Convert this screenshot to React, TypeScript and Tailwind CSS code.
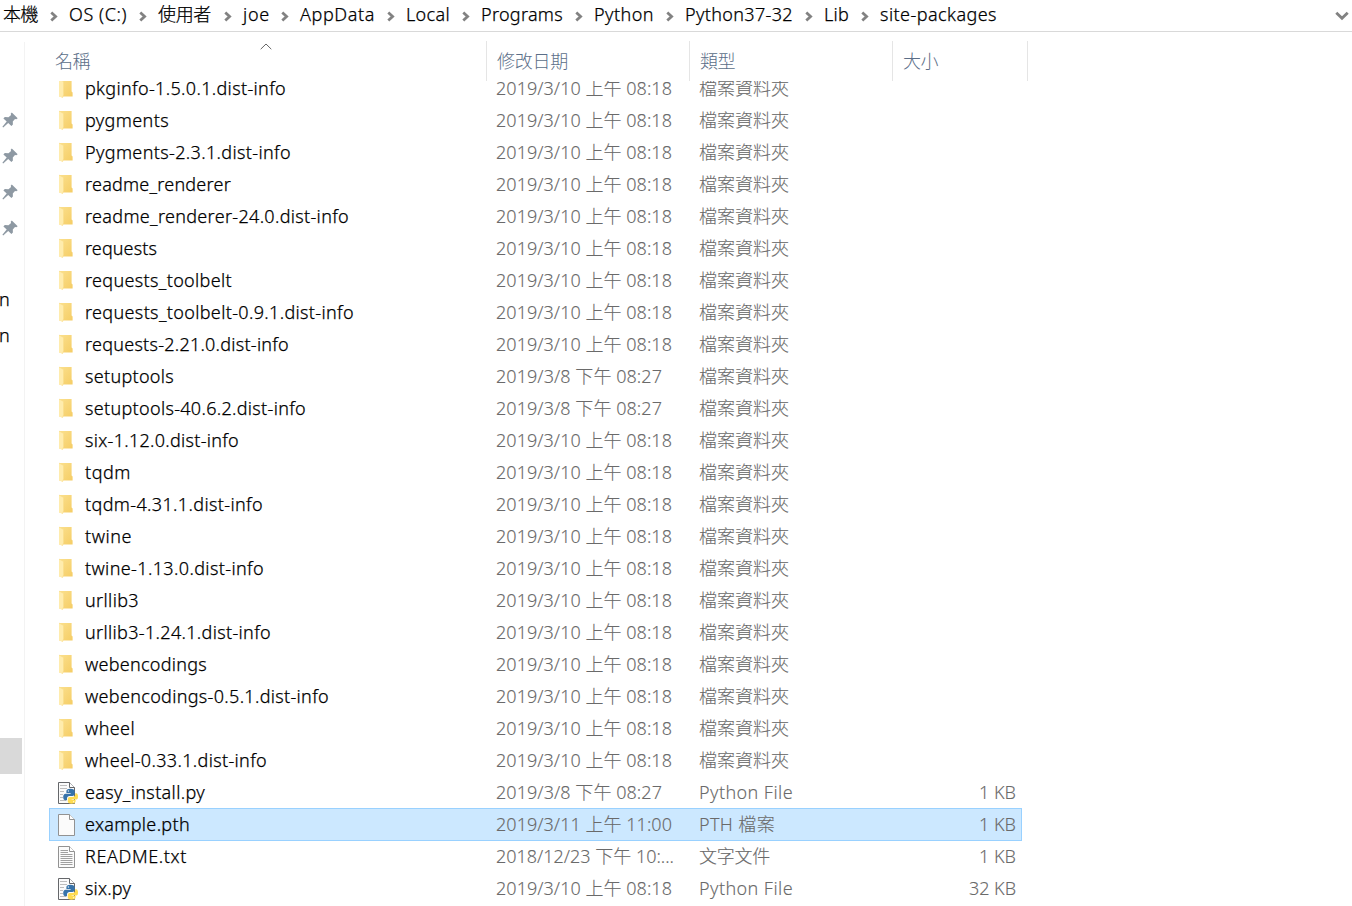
import { useLayoutEffect, useRef } from "react";

type Kind = "folder" | "python" | "blank" | "text";

interface Entry {
  name: string;
  width: number;
  date: string;
  type: string;
  size?: string;
  kind: Kind;
  selected?: boolean;
}

const MORNING = "2019/3/10 上午 08:18";
const EVENING = "2019/3/8 下午 08:27";
const folder = (name: string, width: number, date = MORNING): Entry => ({
  name,
  width,
  date,
  type: "檔案資料夾",
  kind: "folder",
});

const entries: Entry[] = [
  folder("pkginfo-1.5.0.1.dist-info", 201),
  folder("pygments", 84),
  folder("Pygments-2.3.1.dist-info", 206),
  folder("readme_renderer", 146),
  folder("readme_renderer-24.0.dist-info", 264),
  folder("requests", 72),
  folder("requests_toolbelt", 147),
  folder("requests_toolbelt-0.9.1.dist-info", 269),
  folder("requests-2.21.0.dist-info", 204),
  folder("setuptools", 89, EVENING),
  folder("setuptools-40.6.2.dist-info", 221, EVENING),
  folder("six-1.12.0.dist-info", 154),
  folder("tqdm", 46),
  folder("tqdm-4.31.1.dist-info", 178),
  folder("twine", 47),
  folder("twine-1.13.0.dist-info", 179),
  folder("urllib3", 54),
  folder("urllib3-1.24.1.dist-info", 186),
  folder("webencodings", 122),
  folder("webencodings-0.5.1.dist-info", 244),
  folder("wheel", 50),
  folder("wheel-0.33.1.dist-info", 182),
  { name: "easy_install.py", width: 120, date: EVENING, type: "Python File", size: "1 KB", kind: "python" },
  { name: "example.pth", width: 105, date: "2019/3/11 上午 11:00", type: "PTH 檔案", size: "1 KB", kind: "blank", selected: true },
  { name: "README.txt", width: 102, date: "2018/12/23 下午 10:...", type: "文字文件", size: "1 KB", kind: "text" },
  { name: "six.py", width: 46, date: MORNING, type: "Python File", size: "32 KB", kind: "python" },
];

const dateWidths: Record<string, number> = {
  [MORNING]: 176,
  [EVENING]: 166,
  "2019/3/11 上午 11:00": 176,
  "2018/12/23 下午 10:...": 178,
};

const typeWidths: Record<string, number> = {
  檔案資料夾: 90,
  "Python File": 94,
  "PTH 檔案": 76,
  文字文件: 71,
};

const crumbs = [
  { label: "本機", width: 35, cell: "w-[66px]" },
  { label: "OS (C:)", width: 58, cell: "w-[89px]" },
  { label: "使用者", width: 53, cell: "w-[85px]" },
  { label: "joe", width: 27, cell: "w-[57px]" },
  { label: "AppData", width: 75, cell: "w-[106px]" },
  { label: "Local", width: 44, cell: "w-[75px]" },
  { label: "Programs", width: 82, cell: "w-[113px]" },
  { label: "Python", width: 60, cell: "w-[91px]" },
  { label: "Python37-32", width: 108, cell: "w-[139px]" },
  { label: "Lib", width: 25, cell: "w-[56px]" },
  { label: "site-packages", width: 117, cell: "w-[130px]" },
];

/** Spreads a label's letters so that it takes up the given width. */
function Fit({ text, width }: { text: string; width: number }) {
  const ref = useRef<HTMLSpanElement>(null);
  useLayoutEffect(() => {
    const el = ref.current;
    if (!el) return;
    el.style.letterSpacing = "0px";
    const natural = el.getBoundingClientRect().width;
    el.style.letterSpacing = `${(width - natural) / text.length}px`;
  }, [text, width]);
  return (
    <span ref={ref} className="inline-block whitespace-pre">
      {text}
    </span>
  );
}

function FolderIcon() {
  return (
    <svg width="16" height="20" viewBox="0 0 16 20" className="block">
      <defs>
        <linearGradient id="folderBack" x1="0" x2="1" y1="0" y2="1">
          <stop offset="0" stopColor="#fbe08e" />
          <stop offset="1" stopColor="#f5cd65" />
        </linearGradient>
      </defs>
      <path d="M1 1H13.6V13.5L14.6 14.5V18.5H1Z" fill="url(#folderBack)" />
      <path d="M1 1L5.6 3.6V16.6L4.4 20L1 18.3Z" fill="#ffecad" />
      <path d="M1 1L5.6 3.6V16.6L4.4 20" fill="none" stroke="#f8da83" strokeWidth=".5" />
    </svg>
  );
}

function FileIcon({ kind }: { kind: Kind }) {
  const edge = kind === "python" ? "#65676a" : "#929292";
  return (
    <svg width="21" height="23" viewBox="0 0 21 23" className="block">
      <path d="M1.5 1.5H12.5L17.5 6.5V22.5H1.5Z" fill="#fbfbfb" stroke={edge} />
      <path d="M12.5 1.5V6.5H17.5" fill="#fff" stroke={edge} />
      {kind === "text" && (
        <path
          d="M3.5 5.5H11M3.5 7.5H11M3.5 9.5H15.5M3.5 11.5H15.5M3.5 13.5H15.5M3.5 15.5H15.5M3.5 17.5H15.5M3.5 19.5H15.5"
          stroke="#a0a0a0"
        />
      )}
      {kind === "python" && (
        <>
          <path d="M3 4.5H10M3 7.5H10M3 10.5H7M3 13.5H6M3 16.5H6M3 19.5H9" stroke="#bdbdbd" />
          <path
            d="M13.4 7.8C10.3 7.8 9.4 8.8 9.4 10.3V12H13.6V12.7H8.6C7 12.7 6.2 14.1 6.2 15.9C6.2 18 7.1 19.2 8.6 19.2H10V17.3C10 15.9 11 14.9 12.4 14.9H15.4C16.7 14.9 17.6 14 17.6 12.8V10.3C17.6 8.7 16.4 7.8 13.4 7.8Z"
            fill="#3773aa"
          />
          <path
            d="M18.2 12.2V13.6C18.2 15.2 17.2 16.1 15.8 16.1H12.8C11.6 16.1 10.8 17 10.8 18.1V20.3C10.8 21.9 12 22.8 14.4 22.8C17 22.8 18.6 22 18.6 20.3V19.1H14.6V18.4H19.5C20.5 18.4 21 17.2 21 15.4C21 13.5 20.4 12.2 19.2 12.2Z"
            fill="#ffdc52"
          />
          <circle cx="11.4" cy="10" r=".7" fill="#dbe6ef" />
          <circle cx="16.6" cy="20.7" r=".7" fill="#fff6cf" />
        </>
      )}
    </svg>
  );
}

function Pin() {
  return (
    <svg width="16" height="16" viewBox="0 0 16 16" className="block">
      <path
        d="M9.8 0.4L15.7 6.2L14.3 7.2L13 6.9L10.8 9.5L10.9 12.6L9.4 14.1L6.2 11L1.2 15.4L0.4 14.8L4.7 9.4L1.4 6.5L2.8 5.1L6.5 5.3L9.1 3.1L8.7 1.7Z"
        fill="#8e99a3"
      />
    </svg>
  );
}

function Chevron() {
  return (
    <svg width="8" height="11" viewBox="0 0 8 11" className="block">
      <path d="M1.3 1.5L5.6 5.5L1.3 9.5" fill="none" stroke="#828282" strokeWidth="2.8" />
    </svg>
  );
}

export default function App() {
  return (
    <div className="flex h-[906px] w-[1352px] flex-col overflow-hidden bg-white font-['Noto_Sans','Noto_Sans_CJK_TC',sans-serif] text-[18px] leading-8 font-light text-black">
      <header className="flex h-8 shrink-0 border-b border-[#d9d9d9] pl-[3px] [-webkit-text-stroke:0.25px]">
        {crumbs.map((c, i) => (
          <div key={c.label} className={`flex shrink-0 justify-between ${c.cell}`}>
            <div className="-mt-[2px] h-8">
              <Fit text={c.label} width={c.width} />
            </div>
            {i < crumbs.length - 1 && (
              <div className="mt-[11px] mr-[11px]">
                <Chevron />
              </div>
            )}
          </div>
        ))}
        <svg width="14" height="10" viewBox="0 0 14 10" className="mt-[11px] mr-[3px] ml-auto block">
          <path d="M1.3 1.8L7 7.2L12.7 1.8" fill="none" stroke="#828282" strokeWidth="2.9" />
        </svg>
      </header>

      <div className="flex min-h-0 flex-1">
        <nav className="mt-[10px] flex w-[25px] shrink-0 flex-col border-r border-[#f3f3f3]">
          <div className="mt-[59px] flex flex-col">
            {[0, 1, 2, 3].map((n) => (
              <div key={n} className="flex h-9 items-center pt-px pl-[2px]">
                <Pin />
              </div>
            ))}
          </div>
          <div className="mt-9 -ml-px h-9 leading-9 [-webkit-text-stroke:0.25px]">n</div>
          <div className="-ml-px h-9 leading-9 [-webkit-text-stroke:0.25px]">n</div>
          <div className="mt-[385px] h-9 w-[22px] bg-[#d9d9d9]" />
        </nav>

        <main className="flex min-w-0 flex-1 flex-col">
          <div className="mt-[9px] flex h-10 shrink-0 text-[#5b6e88]">
            <div className="flex w-[462px] items-start justify-between border-r border-[#e5e5e5] pl-[30px]">
              <div className="pt-1">
                <Fit text="名稱" width={35} />
              </div>
              <svg width="12" height="7" viewBox="0 0 12 7" className="mt-[2px] mr-[214px] block">
                <path d="M.7 6.2L6 1L11.3 6.2" fill="none" stroke="#666" />
              </svg>
            </div>
            <div className="w-[203px] border-r border-[#e5e5e5] pt-1 pl-[10px]">
              <Fit text="修改日期" width={71} />
            </div>
            <div className="w-[203px] border-r border-[#e5e5e5] pt-1 pl-[10px]">
              <Fit text="類型" width={35} />
            </div>
            <div className="w-[135px] border-r border-[#e5e5e5] pt-1 pl-[10px]">
              <Fit text="大小" width={35} />
            </div>
          </div>

          <div className="min-h-0 flex-1 overflow-hidden">
            <div className="-mt-[9px] ml-6 w-[973px]">
              {entries.map((e) => (
                <div
                  key={e.name}
                  className={`flex items-center text-[#6a6a6a] ${
                    e.selected
                      ? "-mb-px h-[33px] bg-[#cce8ff] pb-px outline outline-1 -outline-offset-1 outline-[#99d1ff]"
                      : "h-8"
                  }`}
                >
                  <div className={`w-9 shrink-0 ${e.kind === "folder" ? "pl-[9px]" : "pl-2"}`}>
                    {e.kind === "folder" ? <FolderIcon /> : <FileIcon kind={e.kind} />}
                  </div>
                  <div className="w-[411px] shrink-0 text-black [-webkit-text-stroke:0.25px]">
                    <Fit text={e.name} width={e.width} />
                  </div>
                  <div className="w-[203px] shrink-0 [-webkit-text-stroke:0.1px]">
                    <Fit text={e.date} width={dateWidths[e.date]} />
                  </div>
                  <div className="w-[203px] shrink-0 [-webkit-text-stroke:0.1px]">
                    <Fit text={e.type} width={typeWidths[e.type]} />
                  </div>
                  <div className="flex flex-1 justify-end pr-[6px] [-webkit-text-stroke:0.1px]">
                    {e.size && <Fit text={e.size} width={e.size === "1 KB" ? 37 : 47} />}
                  </div>
                </div>
              ))}
            </div>
          </div>
        </main>
      </div>
    </div>
  );
}
